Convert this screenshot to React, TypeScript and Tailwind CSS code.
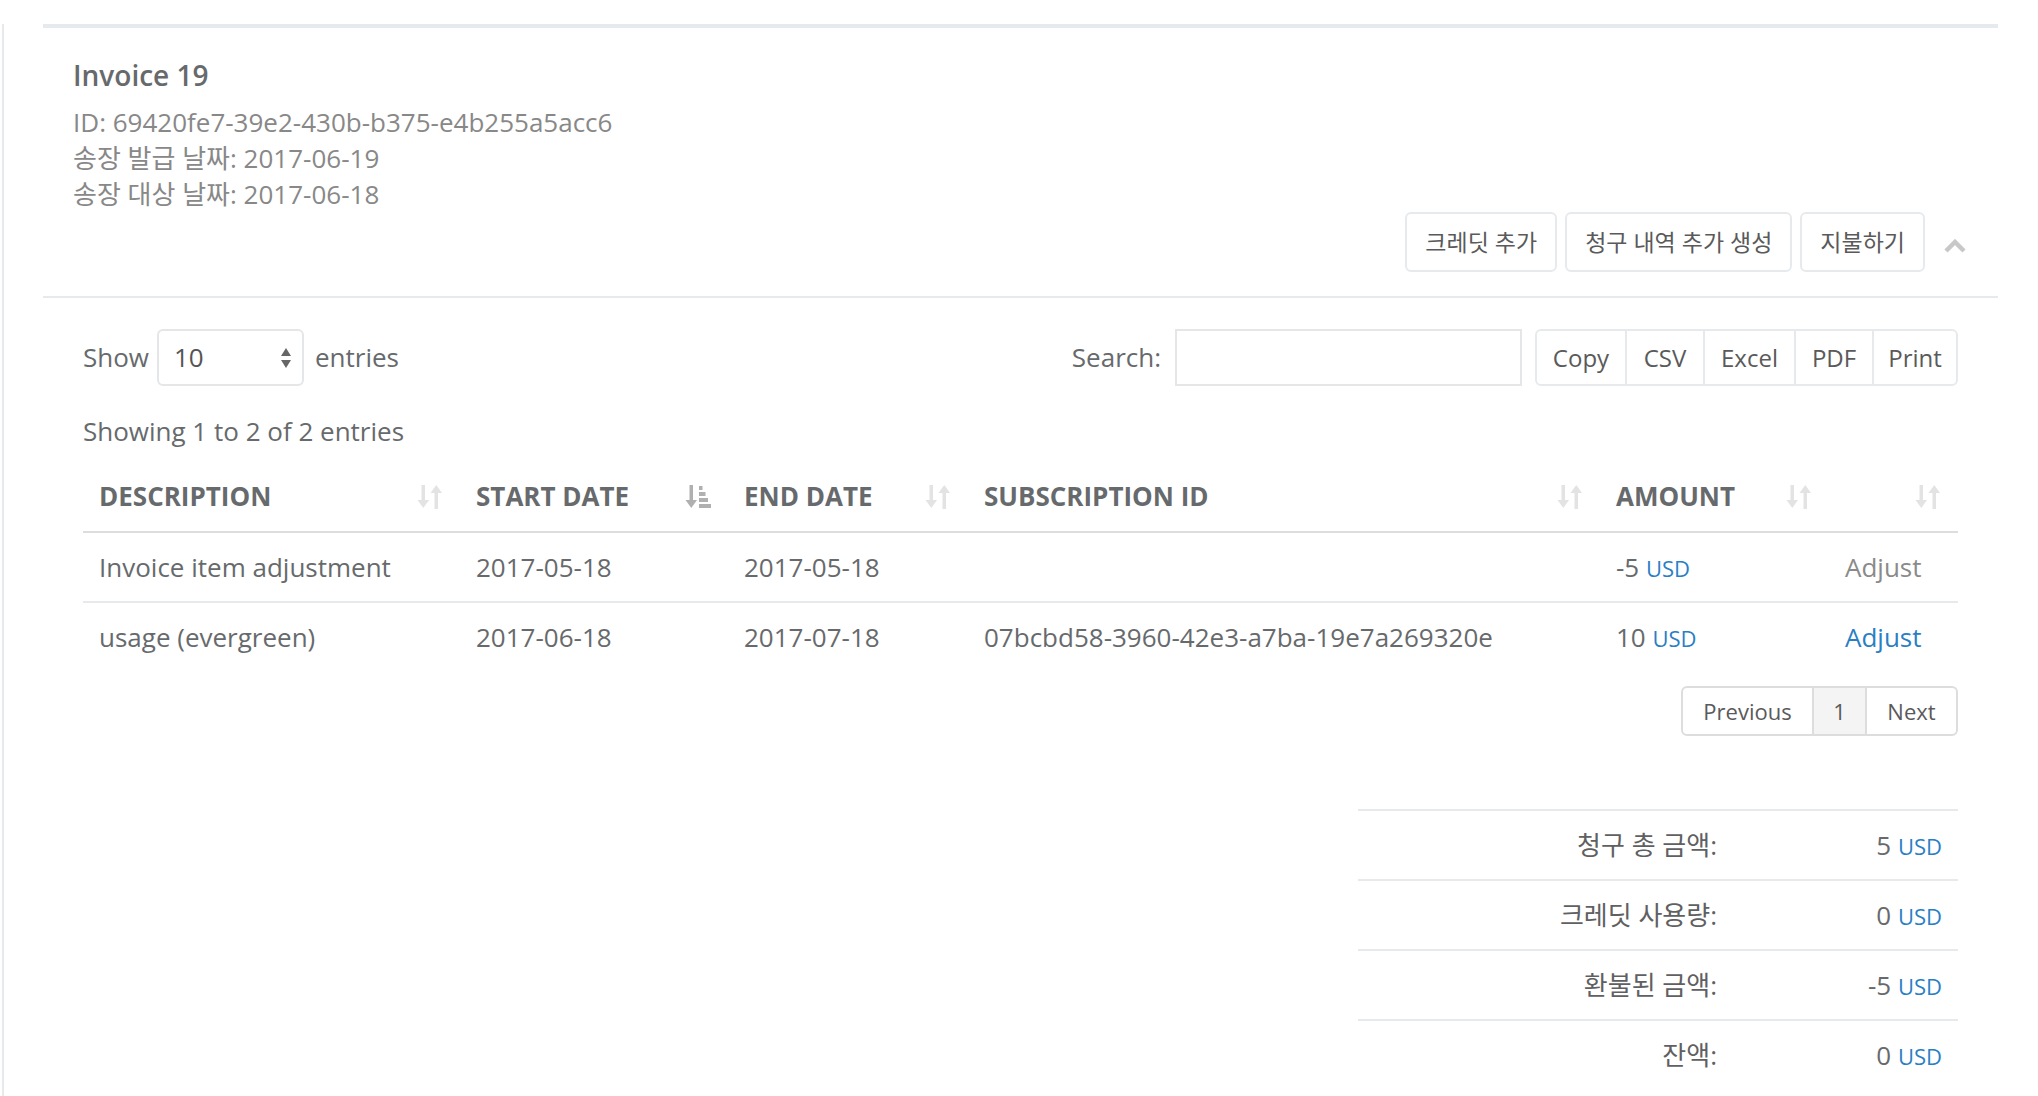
import React from "react";

const font = "font-['Open_Sans','Noto_Sans_CJK_KR',sans-serif]";

function SortIcon({ active = false }: { active?: boolean }) {
  const c = active ? "#b0b0b0" : "#e3e3e3";
  if (active) {
    return (
      <svg width="26" height="26" viewBox="0 0 26 26">
        <rect x="4.5" y="1" width="3.5" height="17" fill={c} />
        <polygon points="0.5,16 12,16 6.25,24" fill={c} />
        <rect x="14" y="2" width="3.5" height="4" fill={c} />
        <rect x="14" y="8" width="6.5" height="4" fill={c} />
        <rect x="14" y="14" width="9" height="4" fill={c} />
        <rect x="14" y="20" width="12" height="4" fill={c} />
      </svg>
    );
  }
  return (
    <svg width="26" height="26" viewBox="0 0 26 26">
      <rect x="4.5" y="1" width="3.5" height="17" fill={c} />
      <polygon points="0.5,16 12,16 6.25,24" fill={c} />
      <polygon points="13.5,9 25,9 19.25,1" fill={c} />
      <rect x="17.5" y="8" width="3.5" height="17" fill={c} />
    </svg>
  );
}

const cols = [
  { label: "DESCRIPTION", w: 377 },
  { label: "START DATE", w: 268, active: true },
  { label: "END DATE", w: 240 },
  { label: "SUBSCRIPTION ID", w: 632 },
  { label: "AMOUNT", w: 229 },
  { label: "", w: 129 },
];

const rows = [
  { desc: "Invoice item adjustment", start: "2017-05-18", end: "2017-05-18", sub: "", amount: "-5", link: false },
  { desc: "usage (evergreen)", start: "2017-06-18", end: "2017-07-18", sub: "07bcbd58-3960-42e3-a7ba-19e7a269320e", amount: "10", link: true },
];

const totals = [
  { label: "청구 총 금액:", value: "5" },
  { label: "크레딧 사용량:", value: "0" },
  { label: "환불된 금액:", value: "-5" },
  { label: "잔액:", value: "0" },
];

export default function App() {
  return (
    <div className={`${font} w-[2038px] h-[1096px] overflow-hidden bg-white text-[#676a6c]`}>
      <div className="ml-[2px] h-full border-l-2 border-[#e7eaec] pl-[39px] pr-[40px]">
        <div className="mt-[24px] border-t-4 border-[#e7eaec]">
          {/* title */}
          <div className="pt-[30px] pl-[30px] pb-[24px] border-b-2 border-[#e7eaec]">
            <h5 className="text-[28px] leading-[34px] font-semibold text-[#676a6c]">Invoice 19</h5>
            <div className="mt-[12px] text-[26px] leading-[36px] text-[#888]">
              <div>ID: 69420fe7-39e2-430b-b375-e4b255a5acc6</div>
              <div>송장 발급 날짜: 2017-06-19</div>
              <div>송장 대상 날짜: 2017-06-18</div>
            </div>
            <div className="flex items-center justify-end pr-[32px]">
              <div className="flex gap-[8px]">
                {["크레딧 추가", "청구 내역 추가 생성", "지불하기"].map((t) => (
                  <button
                    key={t}
                    className="h-[60px] px-[18px] rounded-[6px] border-2 border-[#e7eaec] bg-white text-[23px] text-[#5a5a5a]"
                  >
                    {t}
                  </button>
                ))}
              </div>
              <svg className="ml-[19px] mt-[8px]" width="22" height="14" viewBox="0 0 22 14">
                <polyline points="2,12 11,3 20,12" fill="none" stroke="#c8c8c8" strokeWidth="4.5" />
              </svg>
            </div>
          </div>

          {/* content */}
          <div className="pt-[31px] px-[40px]">
            <div className="flex items-center h-[57px] text-[26px]">
              <span>Show</span>
              <div className="ml-[8px] w-[147px] h-[57px] rounded-[6px] border-2 border-[#e5e6e7] flex items-center justify-between pl-[15px] pr-[10px] text-[#555]">
                <span className="text-[26px]">10</span>
                <svg width="12" height="22" viewBox="0 0 12 22">
                  <polygon points="1,9 11,9 6,1" fill="#666" />
                  <polygon points="1,13 11,13 6,21" fill="#666" />
                </svg>
              </div>
              <span className="ml-[11px]">entries</span>
              <div className="ml-auto flex items-center">
                <span className="mr-[14px]">Search:</span>
                <div className="w-[347px] h-[57px] border-2 border-[#e5e6e7]" />
                <div className="ml-[13px] flex h-[57px] rounded-[6px] border-2 border-[#e7eaec] text-[24px] text-[#5a5a5a]">
                  {[
                    ["Copy", "w-[88px]"],
                    ["CSV", "w-[78px]"],
                    ["Excel", "w-[91px]"],
                    ["PDF", "w-[78px]"],
                    ["Print", "w-[84px]"],
                  ].map(([t, w], i) => (
                    <div
                      key={t}
                      className={`${w} flex items-center justify-center ${i > 0 ? "border-l-2 border-[#e7eaec]" : ""}`}
                    >
                      {t}
                    </div>
                  ))}
                </div>
              </div>
            </div>

            <div className="mt-[27px] text-[26px] leading-[37px]">Showing 1 to 2 of 2 entries</div>

            <table className="mt-[12px] w-full table-fixed border-collapse text-[26px]">
              <colgroup>
                {cols.map((c, i) => (
                  <col key={i} style={{ width: c.w }} />
                ))}
              </colgroup>
              <thead>
                <tr className="border-b-2 border-[#dddddd]">
                  {cols.map((c, i) => (
                    <th key={i} className="h-[70px] p-0 font-bold text-left">
                      <div className="flex items-center justify-between pl-[16px] pr-[17px]">
                        <span>{c.label}</span>
                        <SortIcon active={c.active} />
                      </div>
                    </th>
                  ))}
                </tr>
              </thead>
              <tbody>
                {rows.map((r, i) => (
                  <tr key={i} className={i > 0 ? "border-t-2 border-[#e7eaec]" : ""}>
                    <td className="h-[70px] pl-[16px] whitespace-nowrap">{r.desc}</td>
                    <td className="pl-[16px]">{r.start}</td>
                    <td className="pl-[16px]">{r.end}</td>
                    <td className="pl-[16px] whitespace-nowrap">{r.sub}</td>
                    <td className="pl-[16px]">
                      {r.amount} <span className="text-[22px] text-[#2a7fc4]">USD</span>
                    </td>
                    <td className={`pl-[16px] ${r.link ? "text-[#2a7fc4]" : "text-[#8a8a8a]"}`}>Adjust</td>
                  </tr>
                ))}
              </tbody>
            </table>

            <div className="mt-[14px] flex justify-end">
              <div className="flex h-[50px] rounded-[6px] border-2 border-[#dddddd] text-[22px] text-[#5a5a5a] overflow-hidden">
                <div className="w-[129px] flex items-center justify-center">Previous</div>
                <div className="w-[55px] flex items-center justify-center bg-[#f4f4f4] border-x-2 border-[#dddddd]">1</div>
                <div className="w-[89px] flex items-center justify-center">Next</div>
              </div>
            </div>

            <table className="mt-[73px] ml-auto w-[600px] table-fixed border-collapse text-[26px]">
              <colgroup>
                <col style={{ width: 375 }} />
                <col style={{ width: 225 }} />
              </colgroup>
              <tbody>
                {totals.map((t) => (
                  <tr key={t.label} className="border-t-2 border-[#e7eaec]">
                    <td className="h-[70px] text-right pr-[16px] text-[#5f6062]">{t.label}</td>
                    <td className="text-right pr-[16px]">
                      {t.value} <span className="text-[22px] text-[#2a7fc4]">USD</span>
                    </td>
                  </tr>
                ))}
              </tbody>
            </table>
          </div>
        </div>
      </div>
    </div>
  );
}
